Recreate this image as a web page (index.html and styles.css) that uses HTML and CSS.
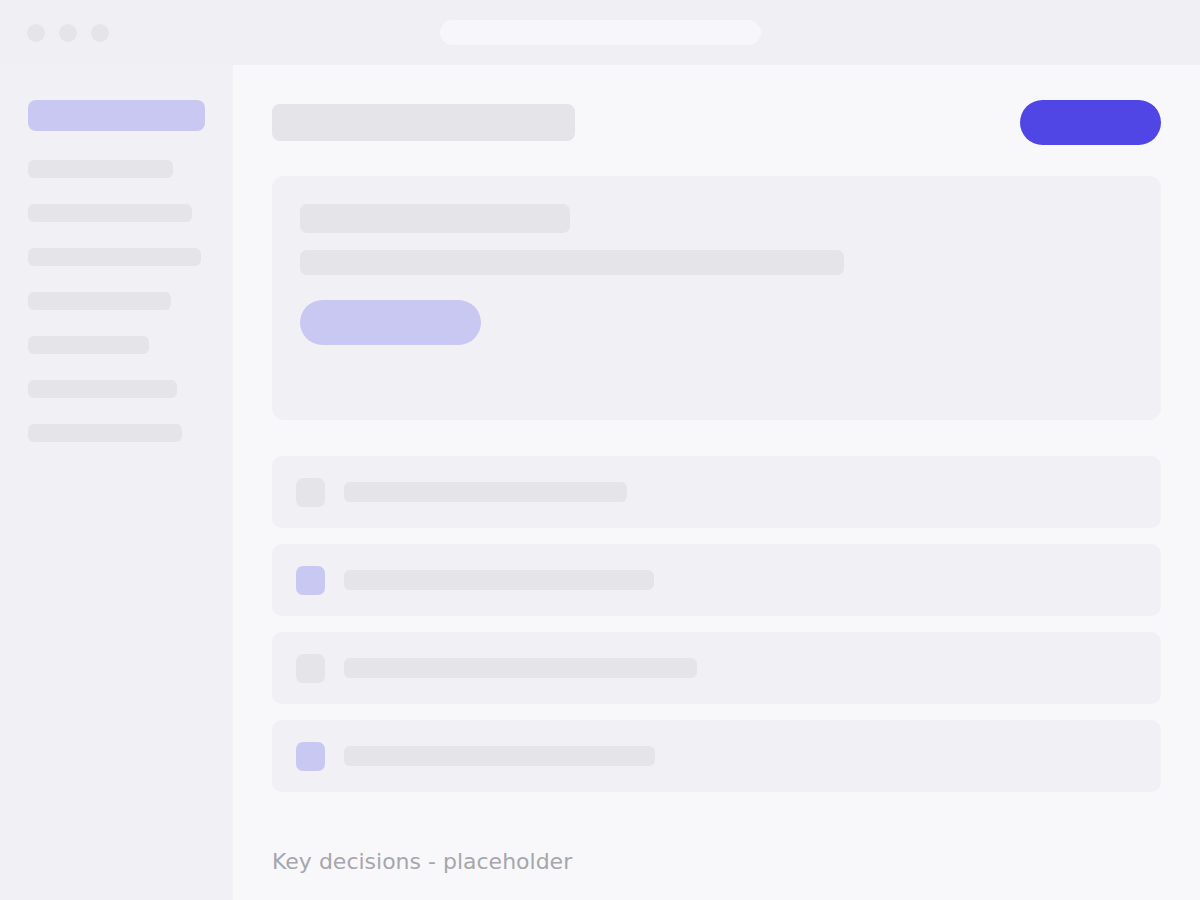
FILE: index.html
```html
<!DOCTYPE html>
<html lang="en">
<head>
  <meta charset="UTF-8" />
  <meta name="viewport" content="width=device-width, initial-scale=1" />
  <title>Key decisions</title>
  <link rel="stylesheet" href="styles.css">
</head>
<body>
  <div class="topbar">
    <div class="dots">
      <span class="dot"></span>
      <span class="dot"></span>
      <span class="dot"></span>
    </div>
    <div class="address"></div>
    <div></div>
  </div>

  <div class="layout">
    <aside class="sidebar">
      <div class="nav-active"></div>
      <div class="nav-item" style="width: 145px"></div>
      <div class="nav-item" style="width: 164px"></div>
      <div class="nav-item" style="width: 173px"></div>
      <div class="nav-item" style="width: 143px"></div>
      <div class="nav-item" style="width: 121px"></div>
      <div class="nav-item" style="width: 149px"></div>
      <div class="nav-item" style="width: 154px"></div>
    </aside>

    <main class="main">
      <div class="header">
        <div class="title-bar"></div>
        <div class="primary-btn"></div>
      </div>

      <div class="hero-card">
        <div class="hero-title"></div>
        <div class="hero-line"></div>
        <div class="hero-pill"></div>
      </div>

      <div class="list">
        <div class="row">
          <div class="row-icon"></div>
          <div class="row-bar" style="width: 283px"></div>
        </div>
        <div class="row">
          <div class="row-icon accent"></div>
          <div class="row-bar" style="width: 310px"></div>
        </div>
        <div class="row">
          <div class="row-icon"></div>
          <div class="row-bar" style="width: 353px"></div>
        </div>
        <div class="row">
          <div class="row-icon accent"></div>
          <div class="row-bar" style="width: 311px"></div>
        </div>
      </div>

      <p class="caption">Key decisions - placeholder</p>
    </main>
  </div>
</body>
</html>
```

FILE: styles.css
```css
body {
  margin: 0;
  width: 1200px;
  height: 900px;
  overflow: hidden;
  font-family: 'DejaVu Sans', 'Noto Sans', sans-serif;
  background: #f8f8fa;
}
.topbar {
  height: 65px;
  background: #efeff4;
  display: grid;
  grid-template-columns: 1fr auto 1fr;
  align-items: center;
  padding: 0 27px;
  box-sizing: border-box;
}
.dots {
  display: flex;
  gap: 14px;
}
.dot {
  width: 18px;
  height: 18px;
  border-radius: 50%;
  background: #e4e4ea;
}
.address {
  width: 321px;
  height: 25px;
  border-radius: 13px;
  background: #f7f7f9;
}
.layout {
  display: flex;
  height: 835px;
}
.sidebar {
  width: 233px;
  flex-shrink: 0;
  background: #f0f0f5;
  padding: 35px 28px;
  box-sizing: border-box;
  display: flex;
  flex-direction: column;
  gap: 26px;
}
.nav-active {
  width: 177px;
  height: 31px;
  border-radius: 8px;
  background: #c8c8f2;
  margin-bottom: 3px;
}
.nav-item {
  height: 18px;
  border-radius: 6px;
  background: #e4e4e9;
}
.main {
  flex: 1;
  padding: 35px 39px;
  box-sizing: border-box;
}
.header {
  display: flex;
  justify-content: space-between;
  align-items: center;
  height: 45px;
}
.title-bar {
  width: 303px;
  height: 37px;
  border-radius: 8px;
  background: #e4e4e9;
}
.primary-btn {
  width: 141px;
  height: 45px;
  border-radius: 23px;
  background: #4f46e5;
}
.hero-card {
  margin-top: 31px;
  height: 244px;
  box-sizing: border-box;
  padding: 28px;
  border-radius: 12px;
  background: #f1f1f5;
}
.hero-title {
  width: 270px;
  height: 29px;
  border-radius: 7px;
  background: #e4e4e9;
}
.hero-line {
  width: 544px;
  height: 25px;
  border-radius: 7px;
  background: #e4e4e9;
  margin-top: 17px;
}
.hero-pill {
  width: 181px;
  height: 45px;
  border-radius: 23px;
  background: #c8c8f2;
  margin-top: 25px;
}
.list {
  margin-top: 36px;
  display: flex;
  flex-direction: column;
  gap: 16px;
}
.row {
  height: 72px;
  border-radius: 10px;
  background: #f1f1f5;
  display: flex;
  align-items: center;
  gap: 19px;
  padding: 0 24px;
}
.row-icon {
  width: 29px;
  height: 29px;
  border-radius: 7px;
  background: #e4e4e9;
}
.row-icon.accent { background: #c8c8f2; }
.row-bar {
  height: 20px;
  border-radius: 6px;
  background: #e4e4e9;
}
.caption {
  margin: 57px 0 0;
  font-size: 22px;
  color: #a6a6ab;
}
```
